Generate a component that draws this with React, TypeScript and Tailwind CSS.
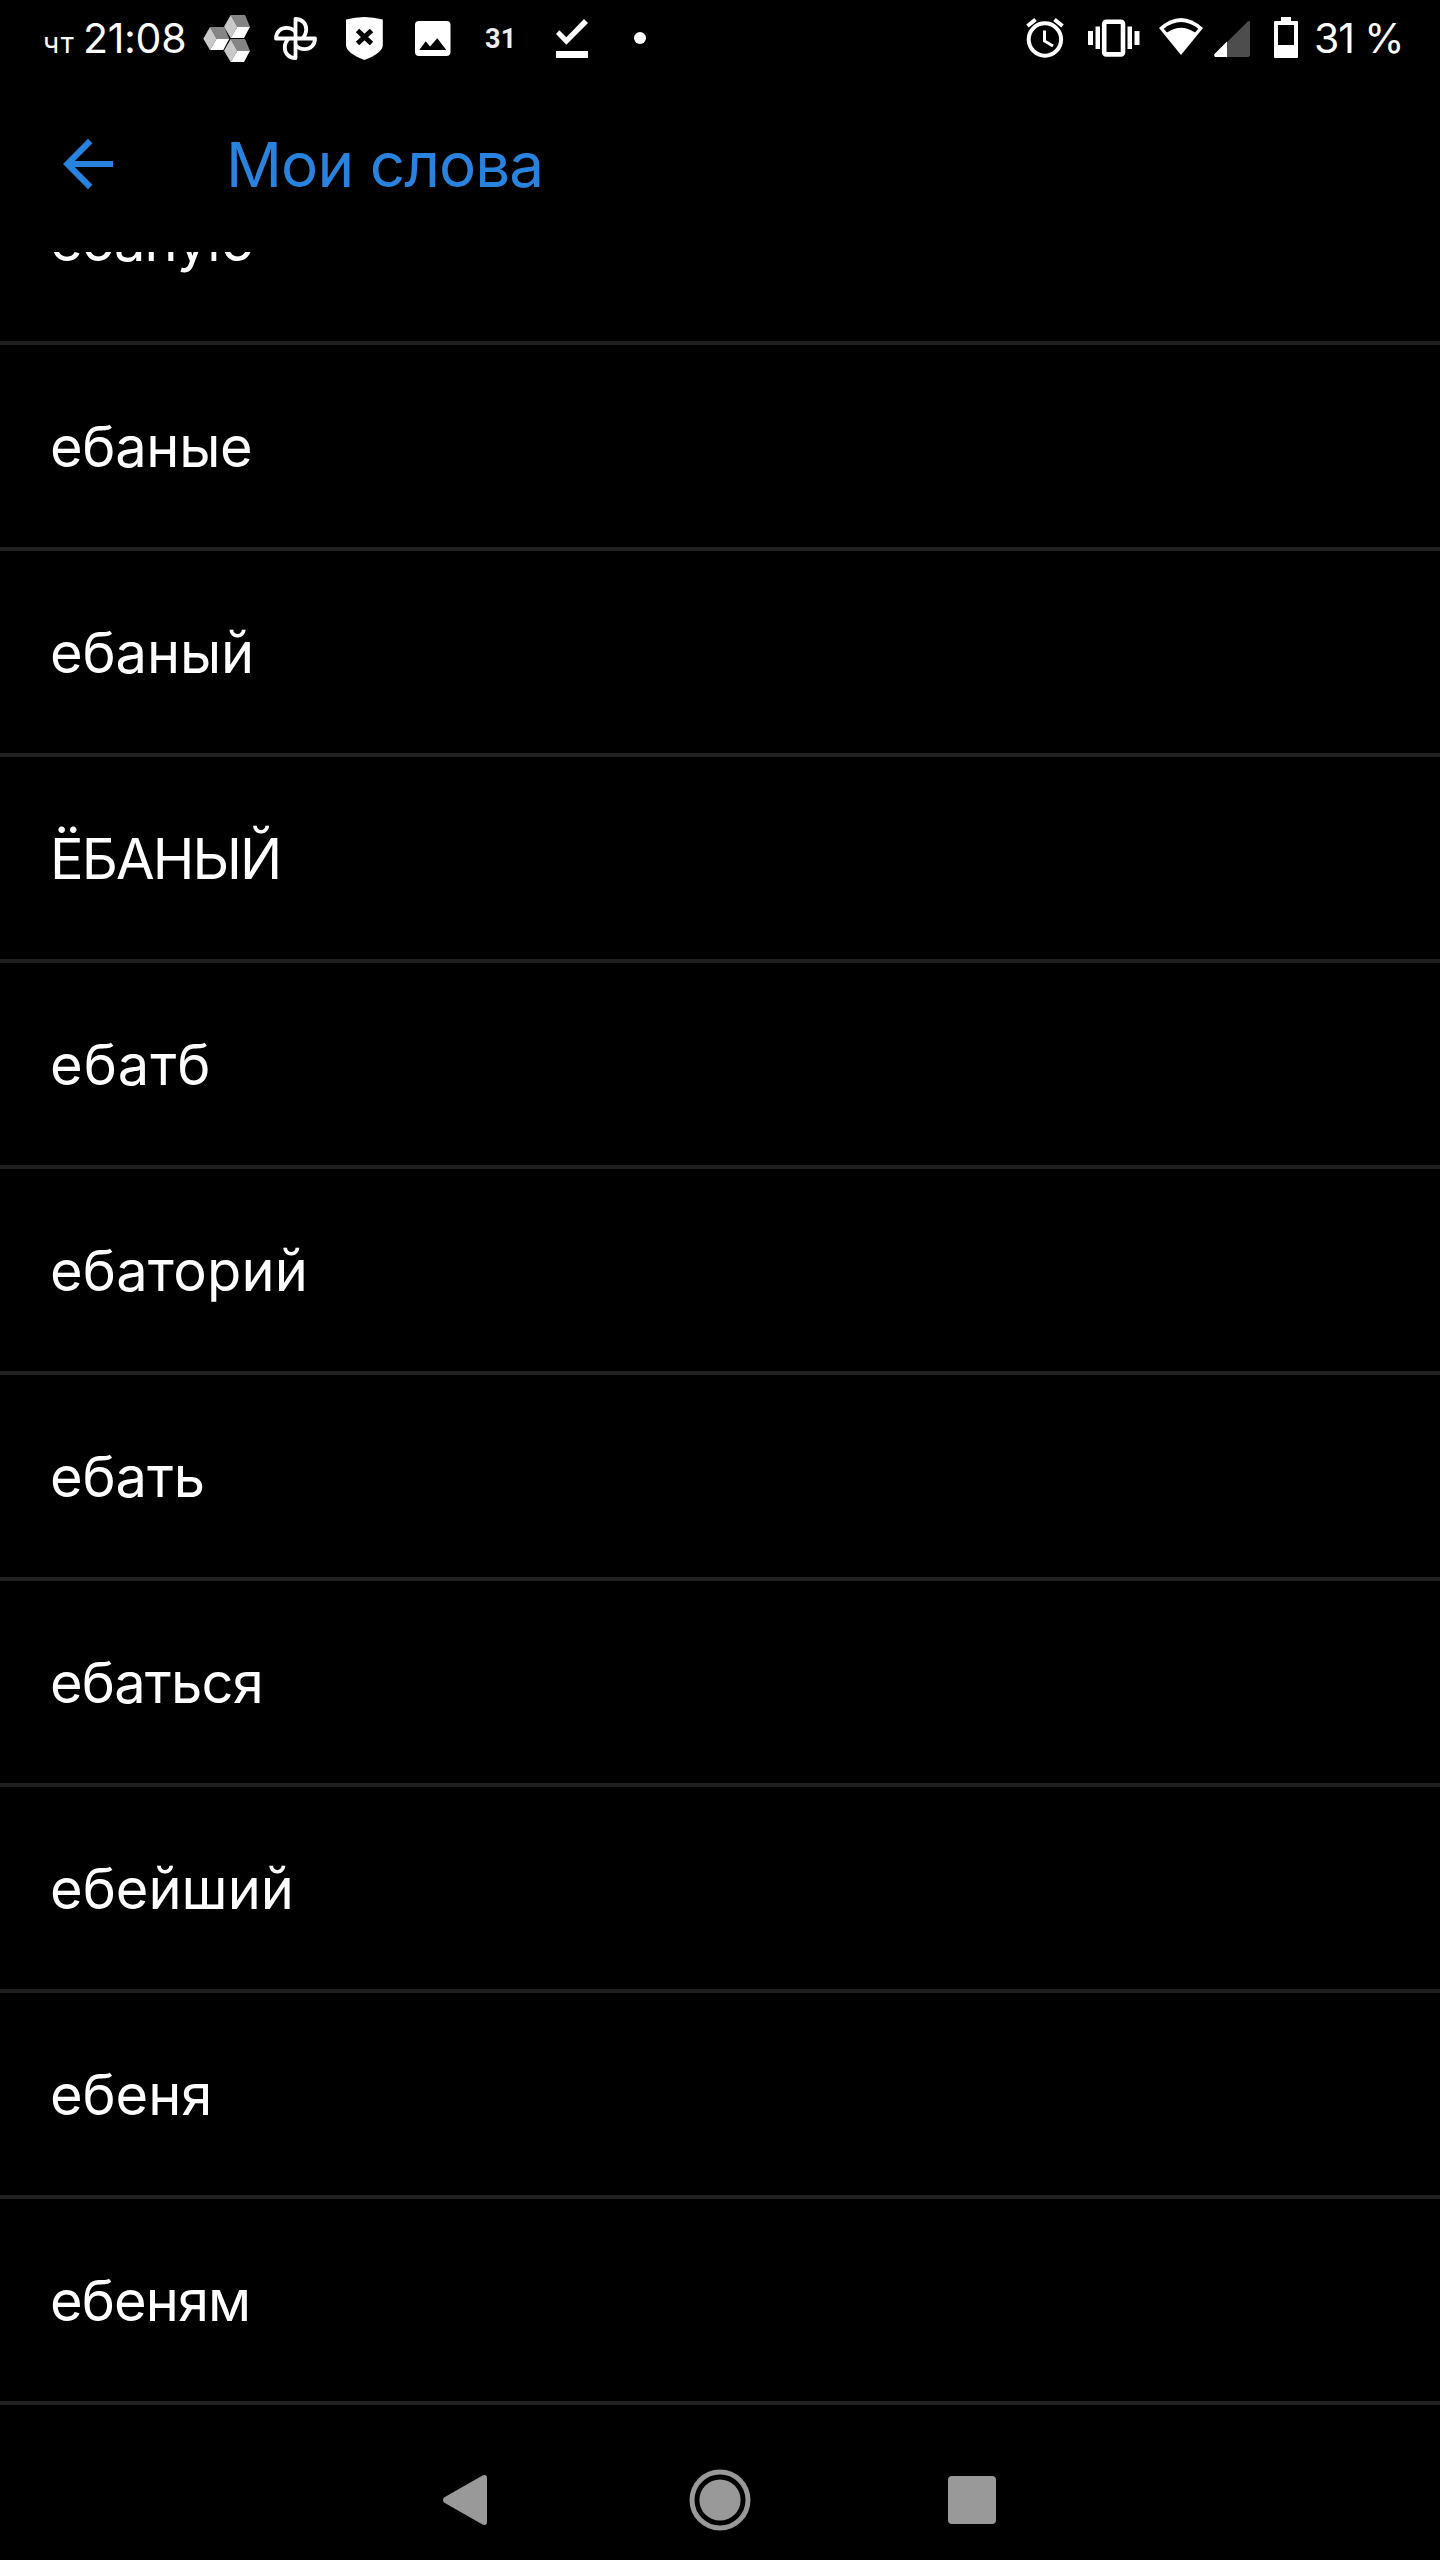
import React from "react";

const words = [
  { text: "ебаную", tracking: "tracking-[-0.9px]" },
  { text: "ебаные", tracking: "tracking-[-0.3px]" },
  { text: "ебаный", tracking: "tracking-[-0.1px]" },
  { text: "ЁБАНЫЙ", tracking: "tracking-[-1.9px]" },
  { text: "ебатб", tracking: "tracking-[1px]" },
  { text: "ебаторий", tracking: "tracking-[0.2px]" },
  { text: "ебать", tracking: "tracking-[-0.1px]" },
  { text: "ебаться", tracking: "tracking-[-0.8px]" },
  { text: "ебейший", tracking: "tracking-normal" },
  { text: "ебеня", tracking: "tracking-[-0.1px]" },
  { text: "ебеням", tracking: "tracking-[-0.9px]" },
];

function Cube({ x, y }: { x: number; y: number }) {
  return (
    <g transform={`translate(${x} ${y})`}>
      <path d="M6.7 0H21L26 11.7H13.3Z" fill="#858585" />
      <path d="M6.7 0L13.3 11.7L6.7 23L0 11.7Z" fill="#c9c9c9" />
      <path d="M13.3 11.7H26L20 23H6.7Z" fill="#fff" />
    </g>
  );
}

function StatusBar() {
  return (
    <div className="h-[76px] flex items-center">
      <div className="w-[203px] pl-[43px] pt-px flex items-baseline shrink-0">
        <span className="w-10 text-[28px] tracking-[1.5px]">чт</span>
        <span className="text-[41px] tracking-[-0.3px]">21:08</span>
      </div>
      <svg width="48" height="76" viewBox="0 0 48 76">
        <Cube x={21} y={15} />
        <Cube x={0.3} y={27} />
        <Cube x={21} y={39} />
      </svg>
      <svg className="ml-[23px]" width="43" height="76" viewBox="0 0 43 76" fill="none" stroke="#fff" strokeWidth="3.8" strokeLinejoin="round">
        {[0, 90, 180, 270].map((deg) => (
          <path key={deg} transform={`rotate(${deg} 21.5 38.5)`} d="M21.5 38.5V19C28.5 19 32.2 24 32.2 29.3C32.2 33 30.8 36 28.4 38.3" />
        ))}
      </svg>
      <svg className="ml-[29px]" width="37" height="76" viewBox="0 0 37 76">
        <path d="M0 19.5Q18.4 14.5 36.8 19.5V45Q36.8 53 18.4 60Q0 53 0 45Z" fill="#fff" />
        <path d="M11.5 30.5L25.5 43.5M25.5 30.5L11.5 43.5" stroke="#000" strokeWidth="5" />
      </svg>
      <svg className="ml-8" width="36" height="76" viewBox="0 0 36 76">
        <rect y="21" width="35.5" height="35" rx="4" fill="#fff" />
        <path d="M4.3 50L10.7 41.3L15 46.5L22.3 38.3L31.3 50Z" fill="#000" />
      </svg>
      <span className="ml-[34px] pt-0.5 w-8 text-[27px] tracking-[0.3px] font-bold font-[Roboto,sans-serif] text-[#eee]">31</span>
      <svg className="ml-[39px]" width="32" height="76" viewBox="0 0 32 76" fill="#fff">
        <path d="M0 34L3.3 30.3L10.3 37.3L28 19L32 23L10.3 44.7Z" />
        <rect y="51" width="32" height="7" />
      </svg>
      <div className="ml-[46px] size-3 rounded-full bg-white" />

      <svg className="ml-auto" width="39" height="76" viewBox="0 0 39 76" fill="none" stroke="#fff" strokeWidth="4">
        <circle cx="18.9" cy="39.5" r="16.2" />
        <path d="M1.5 26L9.5 19.5M28.5 19.5L36.5 26" />
        <path d="M18.5 30.5V41L27 46" strokeWidth="3" />
      </svg>
      <svg className="ml-[23px]" width="52" height="76" viewBox="0 0 52 76" fill="#fff">
        <rect y="31" width="5" height="14" />
        <rect x="7.5" y="26.5" width="4.5" height="22.5" />
        <rect x="16.2" y="21.8" width="18.8" height="32.6" rx="2" fill="none" stroke="#fff" strokeWidth="4.6" />
        <rect x="39.5" y="26.5" width="4.5" height="22.5" />
        <rect x="46.5" y="31" width="5" height="14" />
      </svg>
      <svg className="ml-[19px]" width="44" height="76" viewBox="0 0 44 76">
        <path d="M22 55L0 28Q22 8 44 28Z" fill="#fff" />
        <path d="M4.7 28.7Q22 15.5 39.3 28.7L36 32.5Q22 23 8 32.5Z" fill="#000" />
      </svg>
      <svg className="ml-[11px]" width="36" height="76" viewBox="0 0 36 76">
        <path d="M1 57L0 55L34 21.3Q36 20.5 36 22.5V55.5L34.5 57Z" fill="#4d4d4d" />
        <path d="M1 57L0 54.5L13 41.5V57Z" fill="#fff" />
      </svg>
      <svg className="ml-6" width="24" height="76" viewBox="0 0 24 76">
        <path d="M7 17H17V21H23Q24 21 24 22V57Q24 58 23 58H1Q0 58 0 57V22Q0 21 1 21H7Z" fill="#fff" />
        <rect x="4" y="25" width="16" height="20" fill="#000" />
      </svg>
      <span className="ml-4 pt-px w-[126px] text-[41px] tracking-[-1.1px] whitespace-pre">31 %</span>
    </div>
  );
}

function Header() {
  return (
    <header className="h-44 flex items-center pl-[62px] text-[#2783de]">
      <svg width="52" height="52" viewBox="0 0 52 52" fill="none" stroke="currentColor" strokeWidth="6.2">
        <path d="M51 26H6M28.2 3L5.4 26L28.2 49" />
      </svg>
      <h1 className="ml-[112px] text-[62px] tracking-[-0.9px]">Мои слова</h1>
    </header>
  );
}

function NavBar() {
  return (
    <nav className="h-[120px] flex items-center pl-[442px]">
      <svg width="46" height="52" viewBox="0 0 46 52" fill="#999">
        <path d="M2 23.5L40.5 1.5Q45 0 45 4V48Q45 52 40.5 50.5L2 28.5Q0 26 2 23.5Z" />
      </svg>
      <svg className="ml-[201px]" width="62" height="62" viewBox="0 0 62 62">
        <circle cx="31" cy="31" r="28" fill="none" stroke="#999" strokeWidth="5" />
        <circle cx="31" cy="31" r="20.6" fill="#999" />
      </svg>
      <div className="ml-[197px] size-12 rounded bg-[#999]" />
    </nav>
  );
}

function App() {
  return (
    <div className="w-[1440px] h-[2560px] flex flex-col overflow-hidden bg-black text-white font-[Inter,sans-serif]">
      <StatusBar />
      <Header />
      <main className="h-[2188px] overflow-hidden">
        {/* the first row is scrolled halfway under the header */}
        <ul className="-mt-[113px]">
          {words.map(({ text, tracking }) => (
            <li key={text} className="h-[206px] flex items-center pl-[50px] pt-0.5 border-b-4 border-[#212121] text-[56px]">
              <span className={tracking}>{text}</span>
            </li>
          ))}
        </ul>
      </main>
      <NavBar />
    </div>
  );
}

export default App;
